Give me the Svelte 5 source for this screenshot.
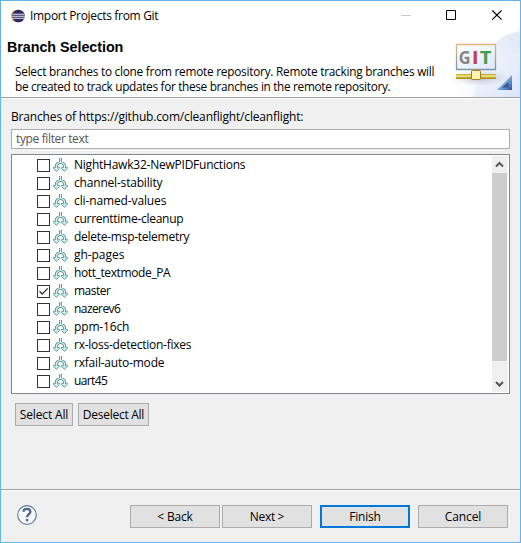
<script>
  const branches = [
    ['NightHawk32-NewPIDFunctions', 171], ['channel-stability', 88], ['cli-named-values', 92],
    ['currenttime-cleanup', 109], ['delete-msp-telemetry', 115], ['gh-pages', 50],
    ['hott_textmode_PA', 96], ['master', 36], ['nazerev6', 46], ['ppm-16ch', 55],
    ['rx-loss-detection-fixes', 117], ['rxfail-auto-mode', 90], ['uart45', 33]
  ].map(([name, width]) => ({ name, width }));
  let selected = $state({ master: true });

  // Spreads the letters so that a label occupies its designed width.
  function fit(node, width) {
    const natural = node.getBoundingClientRect().width;
    node.style.letterSpacing = `${(width + 0.3 - natural) / node.textContent.length}px`;
  }
</script>

{#snippet label(text, width)}<span class="label" use:fit={width}>{text}</span>{/snippet}

<div class="window">
  <div class="titlebar">
    <svg class="logo" width="14" height="14" viewBox="0 0 14 14">
      <circle cx="6.3" cy="7" r="6.2" fill="#f39a2d" />
      <circle cx="7.5" cy="7" r="6.3" fill="#302960" />
      <path d="M1.5 5.2h12M1.2 7.2h12.6M1.5 9.2h12" stroke="#e5e3ef" stroke-width="1.1" />
    </svg>
    <span class="title">{@render label('Import Projects from Git', 128)}</span>
    <svg class="controls" width="101" height="12" viewBox="0 0 101 12" fill="none">
      <path d="M0 5.5h10" stroke="#c9c9c9" />
      <path d="M45.5 .5h9v9h-9z" stroke="#000" />
      <path d="M91.3 .5l9.2 9.2m0-9.2l-9.2 9.2" stroke="#000" stroke-width="1.1" />
    </svg>
  </div>

  <header>
    <div class="intro">
      <h1>{@render label('Branch Selection', 116)}</h1>
      <p>{@render label('Select branches to clone from remote repository. Remote tracking branches will', 419)}</p>
      <p>{@render label('be created to track updates for these branches in the remote repository.', 375)}</p>
    </div>
    <svg class="banner" width="75" height="66" viewBox="0 0 75 66">
      <defs>
        <linearGradient id="sky" x1="0" y1=".6" x2="1" y2=".3"><stop stop-color="#fff" /><stop offset="1" stop-color="#e3eaf8" /></linearGradient>
        <linearGradient id="sky2" x1="0" y1="0" x2="1" y2="1"><stop stop-color="#f6f8fd" stop-opacity=".6" /><stop offset="1" stop-color="#dbe4f7" /></linearGradient>
        <linearGradient id="frame" x2="0" y2="1"><stop stop-color="#e3b777" /><stop offset="1" stop-color="#7895aa" /></linearGradient>
        <linearGradient id="panel" x2="1" y2="1"><stop stop-color="#fff" /><stop offset="1" stop-color="#dce9f8" /></linearGradient>
        <linearGradient id="cable" x2="0" y2="1"><stop stop-color="#b09a2a" /><stop offset=".2" stop-color="#d8c84c" /><stop offset=".45" stop-color="#f8efa0" /><stop offset=".6" stop-color="#c8b63c" /><stop offset="1" stop-color="#a38b1c" /></linearGradient>
        <linearGradient id="corner" x2="1" y2="1"><stop stop-color="#c5dff5" /><stop offset=".6" stop-color="#6d9bd0" /><stop offset="1" stop-color="#2b5296" /></linearGradient>
        <radialGradient id="shade"><stop stop-color="#9b91a5" stop-opacity=".6" /><stop offset="1" stop-color="#bbb4cf" stop-opacity="0" /></radialGradient>
      </defs>
      <path d="M0 66C20 58 32 42 42 22Q52 4 75 0v66z" fill="url(#sky)" />
      <path d="M28 66Q36 26 75 22v44z" fill="url(#sky2)" />
      <ellipse cx="34" cy="47" rx="30" ry="8" fill="url(#shade)" />
      <path d="M11.5 13.5h39v25h-39z" fill="url(#panel)" stroke="url(#frame)" stroke-width="1.3" />
      <g font-size="18" font-weight="700" font-family="Open Sans, sans-serif">
        <text x="13.8" y="32.5" textLength="11.8" lengthAdjust="spacingAndGlyphs" fill="#858585">G</text>
        <text x="26.8" y="32.5" textLength="7" lengthAdjust="spacingAndGlyphs" fill="#c54050">I</text>
        <text x="34.8" y="32.5" textLength="11.7" lengthAdjust="spacingAndGlyphs" fill="#499d51">T</text>
      </g>
      <path d="M11 43h40v5H11z" fill="url(#cable)" />
      <path d="M28.5 38h5v2h-5z" fill="#a7a275" />
      <rect x="26.5" y="39.5" width="9" height="9" rx="1" fill="#fff1b5" stroke="#a37820" />
      <path d="M67 44v15H52z" fill="url(#corner)" />
      <path d="M63.5 51v5.5H57z" fill="#1f4386" opacity=".75" />
    </svg>
  </header>

  <main>
    <div class="caption">{@render label('Branches of https://github.com/cleanflight/cleanflight:', 292)}</div>
    <div class="filter">{@render label('type filter text', 72)}</div>
    <div class="tree">
      <div class="rows">
        {#each branches as branch}
          <label class="row">
            <input type="checkbox" bind:checked={selected[branch.name]} />
            <span class="box">
              {#if selected[branch.name]}
                <svg width="11" height="11" viewBox="0 0 11 11"><path d="M1.5 5.2L4.2 8 9.7 2.4" fill="none" stroke="#333" stroke-width="1.3" /></svg>
              {/if}
            </span>
            <svg class="branch" width="15" height="14" viewBox="0 0 15 14">
              <g fill="none">
                <path d="M7.5 0v4.5M3.5 10V7L5 5.2l2.5-.9L10 5.2 11.5 7v3" stroke="#5d9194" stroke-width="3" />
                <path d="M7.5 0v4.5M3.5 10V7L5 5.2l2.5-.9L10 5.2 11.5 7v3" stroke="#d5f5f3" stroke-width="1.2" />
              </g>
              <path d="M.5 9.4h6v.9L3.5 13.4l-3-3.1zM8.5 9.4h6v.9l-3 3.1-3-3.1z" fill="#c3f1ee" stroke="#5d9194" stroke-width=".9" />
              <path d="M2.8 8.8h1.4v1.6H2.8zM10.8 8.8h1.4v1.6h-1.4z" fill="#c3f1ee" />
            </svg>
            <span class="name">{@render label(branch.name, branch.width)}</span>
          </label>
        {/each}
      </div>
      <div class="scrollbar">
        <svg width="15" height="17" viewBox="0 0 15 17"><path d="M4 10.5L7.5 7l3.5 3.5" /></svg>
        <div class="thumb"></div>
        <svg class="down" width="15" height="17" viewBox="0 0 15 17"><path d="M4 7l3.5 3.5L11 7" /></svg>
      </div>
    </div>
    <div class="selection">
      <button class="all">{@render label('Select All', 48)}</button>
      <button class="none">{@render label('Deselect All', 61)}</button>
    </div>
  </main>

  <footer>
    <svg class="help" width="22" height="22" viewBox="0 0 22 22">
      <circle cx="11" cy="11" r="9.3" fill="#f5f7fa" stroke="#687d99" stroke-width="1.2" />
      <path d="M7.4 7.7C7.6 3.8 14.4 3.9 14.4 7.8C14.4 10.3 11 10.3 11 13.3" fill="none" stroke="#4e6787" stroke-width="2.3" />
      <path d="M9.8 15h2.5v2.3H9.8z" fill="#4e6787" />
    </svg>
    <div class="actions">
      <button>{@render label('< Back', 35)}</button>
      <button class="next">{@render label('Next >', 34)}</button>
      <button class="finish">{@render label('Finish', 31)}</button>
      <button>{@render label('Cancel', 36)}</button>
    </div>
  </footer>
</div>

<style>
  .window { box-sizing: border-box; width: 521px; height: 543px; border: 1px solid #64b5ec; background: #f0f0f0; display: flex; flex-direction: column; font: 12px/16px "Open Sans", "Noto Sans", sans-serif; color: #000; overflow: hidden; }
  .label { white-space: pre; display: inline-block; }
  .titlebar { height: 32px; background: #fff; display: flex; flex: none; align-items: flex-start; padding: 0 16px 0 10px; }
  .logo { margin-top: 8px; flex: none; }
  .title { margin: 7px 0 0 5px; flex: 1; }
  .controls { margin: 9px 2px 0 0; flex: none; }
  header { height: 64px; flex: none; display: flex; justify-content: space-between; background: #fff; border-bottom: 1px solid #a0a0a0; }
  .intro { padding: 6px 0 0 6px; width: 437px; white-space: nowrap; }
  h1 { font: bold 14.3px/16px "Liberation Sans", Arial, sans-serif; margin: 0 0 9px; }
  p { margin: 0 0 0 8px; height: 15px; font-size: 11.8px; line-height: 15px; }
  .banner { flex: none; margin-top: -2px; height: 66px; }
  main { border-top: 1px solid #fff; height: 391px; flex: none; box-sizing: border-box; padding: 10px 10px 0; }
  .caption { height: 20px; }
  .filter { box-sizing: border-box; height: 20px; border: 1px solid #abadb3; background: #fff; padding: 1px 4px; color: #555; }
  .tree { box-sizing: border-box; height: 240px; border: 1px solid #828790; background: #fff; margin-top: 5px; display: flex; justify-content: space-between; padding: 1px; }
  .row { height: 18px; display: flex; align-items: center; padding-left: 24px; }
  input { appearance: none; width: 0; height: 0; margin: 0; }
  .box { box-sizing: border-box; width: 13px; height: 13px; border: 1px solid #333; background: #fff; }
  .box svg { display: block; }
  .branch { margin: 0 0 0 3px; }
  .name { margin-left: 6px; line-height: 16px; }
  .scrollbar { width: 15px; border-right: 1px solid #f5f5f5; background: #f0f0f0; display: flex; flex-direction: column; }
  .scrollbar path { fill: none; stroke: #555; stroke-width: 2; }
  .scrollbar svg { display: block; }
  .thumb { height: 188px; background: #cdcdcd; }
  .down { margin-top: auto; }
  .selection { display: flex; gap: 5px; padding: 9px 4px; }
  button { box-sizing: border-box; width: 90px; height: 23px; border: 1px solid #adadad; background: #e1e1e1; padding: 0; font: inherit; color: #000; line-height: 20px; }
  .all { width: 58px; }
  .none { width: 71px; }
  footer { flex: 1; border-top: 1px solid #a0a0a0; box-shadow: inset 0 1px #fff; padding: 15px 12px 0 15px; display: flex; justify-content: space-between; align-items: flex-start; }
  .help { margin-top: -1px; }
  .actions { display: flex; }
  .next { margin-left: 2px; }
  .finish { border: 2px solid #0078d7; margin: 0 8px; line-height: 18px; }
</style>
